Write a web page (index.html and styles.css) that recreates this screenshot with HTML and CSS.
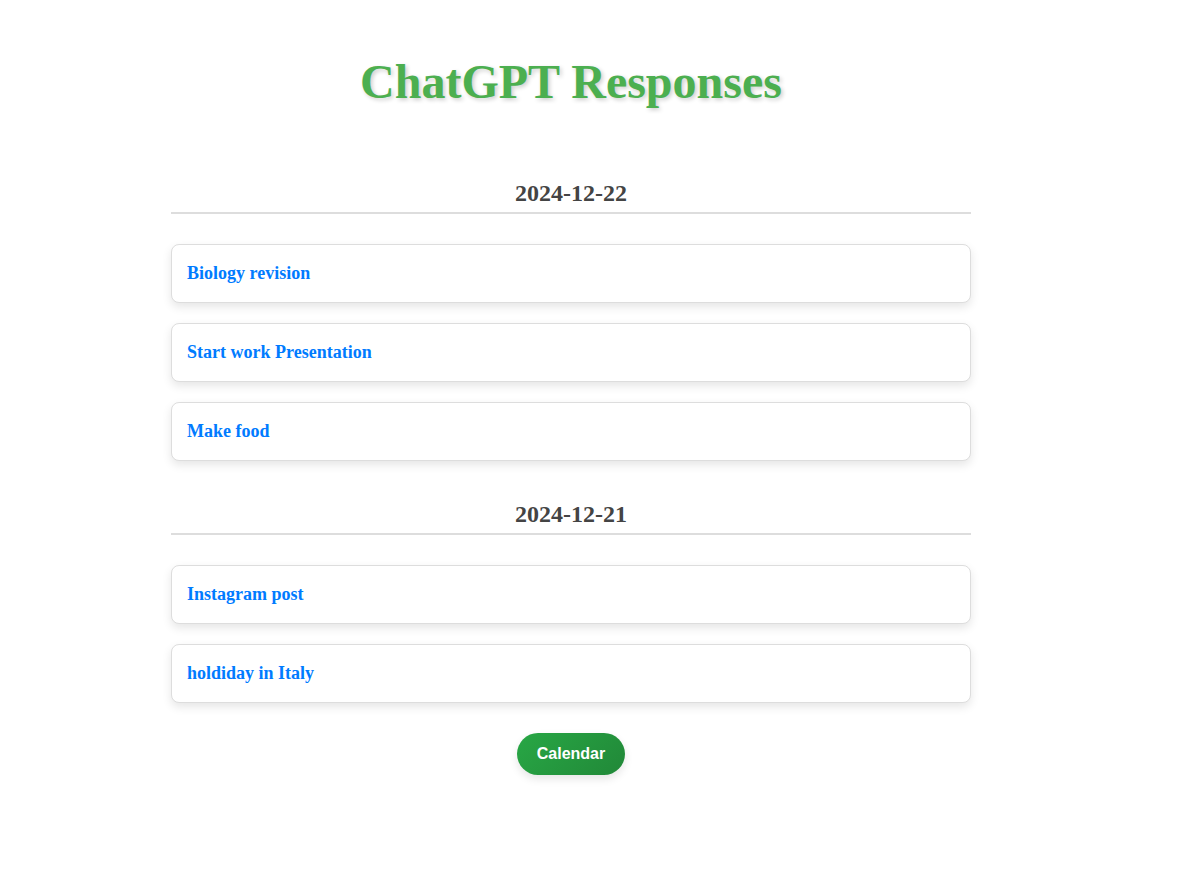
FILE: index.html
```html
<!DOCTYPE html>
<html lang="en">
<head>
<meta charset="utf-8">
<title>ChatGPT Responses</title>
<link rel="stylesheet" href="styles.css">
</head>
<body>
<main class="page">
  <h1 class="title">ChatGPT Responses</h1>
  <section class="day">
    <h2 class="date">2024-12-22</h2>
    <ul class="list">
      <li class="card"><a class="link" href="#">Biology revision</a></li>
      <li class="card"><a class="link" href="#">Start work Presentation</a></li>
      <li class="card"><a class="link" href="#">Make food</a></li>
    </ul>
  </section>
  <section class="day">
    <h2 class="date">2024-12-21</h2>
    <ul class="list">
      <li class="card"><a class="link" href="#">Instagram post</a></li>
      <li class="card"><a class="link" href="#">holdiday in Italy</a></li>
    </ul>
  </section>
  <button class="calendar" type="button">Calendar</button>
</main>
</body>
</html>
```
FILE: styles.css
```css
body {
  margin: 0;
  padding: 0 45px 0 0;
  background: #fff;
  font-family: "Liberation Serif", serif;
}
.page {
  display: flex;
  flex-direction: column;
  align-items: center;
  padding: 53px 0 40px;
}
.title {
  margin: 0 0 69px;
  font-size: 48px;
  line-height: 58px;
  color: #4caf50;
  text-shadow: 2px 2px 4px rgba(0, 0, 0, 0.2);
}
.day {
  width: 100%;
  max-width: 800px;
  margin-bottom: 40px;
}
.date {
  margin: 0 0 30px;
  padding-bottom: 5px;
  border-bottom: 2px solid #ddd;
  font-size: 24px;
  line-height: 27px;
  text-align: center;
  color: #444;
}
.list {
  display: flex;
  flex-direction: column;
  gap: 20px;
  margin: 0;
  padding: 0;
  list-style: none;
}
.card {
  padding: 18px 15px;
  border: 1px solid #ddd;
  border-radius: 8px;
  background: #fff;
  box-shadow: 0 4px 10px rgba(0, 0, 0, 0.1);
  line-height: 21px;
}
.link {
  font-size: 18px;
  font-weight: bold;
  color: #007bff;
  text-decoration: none;
}
.day:last-of-type {
  margin-bottom: 30px;
}
.calendar {
  padding: 12px 20px;
  border: 0;
  border-radius: 25px;
  background: linear-gradient(135deg, #28a745, #218838);
  box-shadow: 0 4px 8px rgba(0, 0, 0, 0.1);
  font: bold 16px/18px "Liberation Sans", Arial, sans-serif;
  color: #fff;
  cursor: pointer;
}
```
